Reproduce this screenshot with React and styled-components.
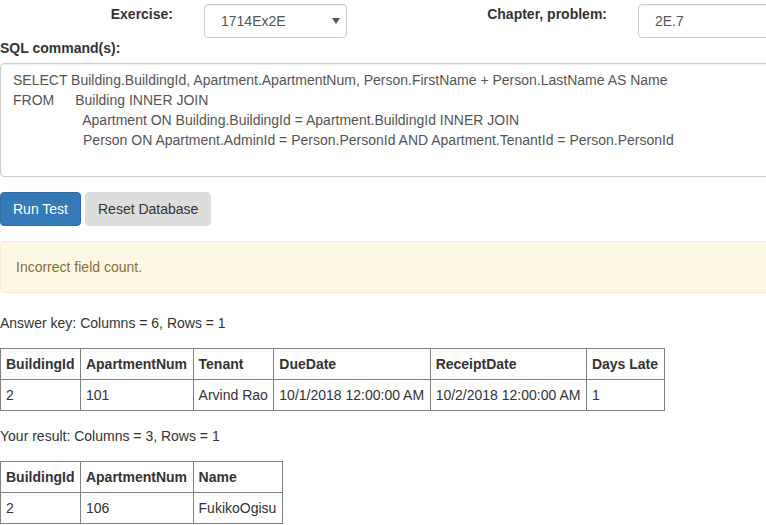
import React from "react";
import styled, { createGlobalStyle } from "styled-components";

const GlobalStyle = createGlobalStyle`
  html, body {
    margin: 0;
    padding: 0;
    overflow: hidden;
    background: #fff;
  }
  body {
    font-family: "Liberation Sans", Arial, sans-serif;
    font-size: 14px;
    line-height: 20px;
    color: #333;
  }
  * { box-sizing: border-box; }
`;

const SQL = `SELECT Building.BuildingId, Apartment.ApartmentNum, Person.FirstName + Person.LastName AS Name
FROM\tBuilding INNER JOIN
\t\t  Apartment ON Building.BuildingId = Apartment.BuildingId INNER JOIN
\t\t  Person ON Apartment.AdminId = Person.PersonId AND Apartment.TenantId = Person.PersonId`;

const answerKey = {
  columns: ["BuildingId", "ApartmentNum", "Tenant", "DueDate", "ReceiptDate", "Days Late"],
  rows: [["2", "101", "Arvind Rao", "10/1/2018 12:00:00 AM", "10/2/2018 12:00:00 AM", "1"]],
};

const yourResult = {
  columns: ["BuildingId", "ApartmentNum", "Name"],
  rows: [["2", "106", "FukikoOgisu"]],
};

export default function App() {
  return (
    <Page>
      <GlobalStyle />
      <TopRow>
        <FieldLabel $width={173}>Exercise:</FieldLabel>
        <SelectBox>
          <span>1714Ex2E</span>
          <svg width="8" height="6" viewBox="0 0 8 6">
            <path d="M0 0 L8 0 L4 6 Z" fill="#555" />
          </svg>
        </SelectBox>
        <FieldLabel $width={260}>Chapter, problem:</FieldLabel>
        <TextInput readOnly value="2E.7" />
      </TopRow>

      <SectionLabel>SQL command(s):</SectionLabel>
      <SqlArea readOnly value={SQL} spellCheck={false} />

      <ButtonRow>
        <Button $primary>Run Test</Button>
        <Button>Reset Database</Button>
      </ButtonRow>

      <Alert>Incorrect field count.</Alert>

      <Summary>Answer key: Columns = 6, Rows = 1</Summary>
      <ResultTable data={answerKey} />

      <Summary>Your result: Columns = 3, Rows = 1</Summary>
      <ResultTable data={yourResult} />
    </Page>
  );
}

function ResultTable({ data }) {
  return (
    <Table>
      <thead>
        <tr>
          {data.columns.map((c) => (
            <Th key={c}>{c}</Th>
          ))}
        </tr>
      </thead>
      <tbody>
        {data.rows.map((row, i) => (
          <tr key={i}>
            {row.map((v, j) => (
              <Td key={j}>{v}</Td>
            ))}
          </tr>
        ))}
      </tbody>
    </Table>
  );
}

const Page = styled.div`
  width: 800px;
  padding-top: 4px;
  display: flex;
  flex-direction: column;
  align-items: flex-start;
`;

const TopRow = styled.div`
  display: flex;
  align-items: flex-start;
  width: 100%;
`;

const FieldLabel = styled.label`
  flex: 0 0 ${(p) => p.$width}px;
  margin-right: 31px;
  text-align: right;
  font-weight: bold;
  line-height: 20px;
`;

const SelectBox = styled.div`
  flex: 0 0 143px;
  height: 34px;
  display: flex;
  align-items: center;
  justify-content: space-between;
  padding: 0 6px 0 16px;
  border: 1px solid #ccc;
  border-radius: 4px;
  color: #555;
  background: #fff;
  box-shadow: inset 0 1px 1px rgba(0, 0, 0, 0.075);
`;

const TextInput = styled.input`
  flex: 0 0 160px;
  height: 34px;
  padding: 0 16px;
  border: 1px solid #ccc;
  border-radius: 4px;
  font: inherit;
  color: #555;
  box-shadow: inset 0 1px 1px rgba(0, 0, 0, 0.075);
  outline: none;
`;

const SectionLabel = styled.label`
  font-weight: bold;
  margin-bottom: 5px;
`;

const SqlArea = styled.textarea`
  width: 100%;
  height: 114px;
  padding: 6px 12px;
  border: 1px solid #ccc;
  border-radius: 4px;
  font: inherit;
  line-height: 20px;
  color: #555;
  tab-size: 8;
  resize: none;
  overflow: hidden;
  white-space: pre;
  outline: none;
  box-shadow: inset 0 1px 1px rgba(0, 0, 0, 0.075);
`;

const ButtonRow = styled.div`
  display: flex;
  gap: 4px;
  margin-top: 15px;
`;

const Button = styled.button`
  height: 34px;
  padding: 6px 12px;
  font: inherit;
  line-height: 20px;
  border-radius: 4px;
  border: 1px solid ${(p) => (p.$primary ? "#2e6da4" : "#ddd")};
  background: ${(p) => (p.$primary ? "#337ab7" : "#ddd")};
  color: ${(p) => (p.$primary ? "#fff" : "#333")};
  cursor: pointer;
`;

const Alert = styled.div`
  width: 100%;
  margin-top: 15px;
  padding: 15px;
  border: 1px solid #faebcc;
  border-radius: 4px;
  background: #fcf8e3;
  color: #8a6d3b;
`;

const Summary = styled.p`
  margin: 20px 0 15px;
`;

const Table = styled.table`
  border-collapse: collapse;
  border: 1px solid #808080;

  & + p {
    margin-top: 15px;
  }
`;

const Th = styled.th`
  border: 1px solid #808080;
  padding: 5px 5.5px 5px 5px;
  text-align: left;
  font-weight: bold;
  line-height: 20px;
  white-space: nowrap;
`;

const Td = styled.td`
  border: 1px solid #808080;
  padding: 5px 5.5px 5px 5px;
  line-height: 20px;
  white-space: nowrap;
`;
